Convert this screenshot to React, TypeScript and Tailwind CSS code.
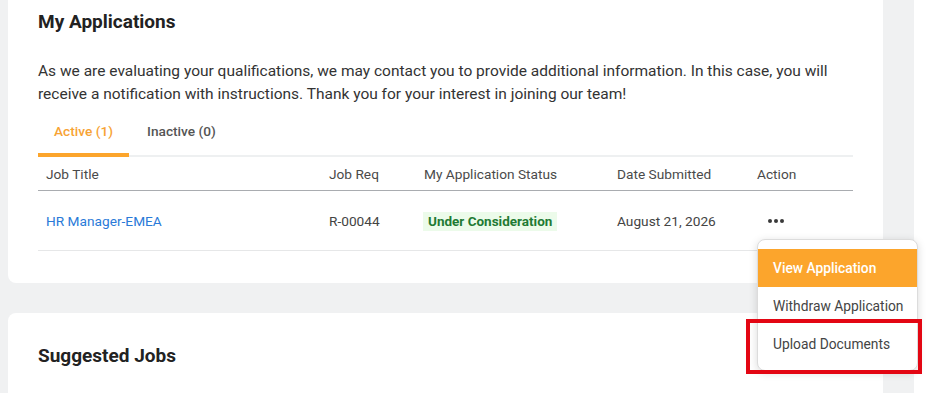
import React from 'react'

const rows = [
  {
    title: 'HR Manager-EMEA',
    req: 'R-00044',
    status: 'Under Consideration',
    date: 'August 21, 2026',
  },
]

const menuItems = ['View Application', 'Withdraw Application', 'Upload Documents']

export default function App() {
  return (
    <div className="w-[936px] h-[393px] overflow-hidden flex bg-white font-[Roboto,sans-serif]">
      <div className="w-[914px] shrink-0 bg-[#f0f1f2] pl-2 pr-[31px] flex flex-col gap-[30px]">
        {/* My Applications */}
        <section className="bg-white rounded-b-lg px-[30px] pt-2 pb-[32px]">
          <h2 className="text-[19px] leading-[28px] font-bold text-[#222]">My Applications</h2>
          <p className="mt-6 text-[15.5px] leading-[23px] text-[#333]">
            As we are evaluating your qualifications, we may contact you to provide additional information. In this
            case, you will receive a notification with instructions. Thank you for your interest in joining our team!
          </p>

          {/* Tabs */}
          <div className="mt-[2px] flex gap-[2px] border-b-2 border-[#eef0f1]">
            <button className="px-4 pt-[13px] pb-[12px] text-[13.7px] leading-[20px] font-medium text-[#f7a334] border-b-4 border-[#fca52c] rounded-t-[3px] -mb-[2px]">
              Active (1)
            </button>
            <button className="px-4 pt-[13px] pb-[14px] text-[13.7px] leading-[20px] font-medium text-[#555]">
              Inactive (0)
            </button>
          </div>

          {/* Table */}
          <div className="text-[13.7px] leading-[20px]">
            <div className="grid grid-cols-[283px_95px_193px_140px_1fr] h-[34px] items-center border-b border-[#a9acb0] text-[#4a4a4a]">
              <div className="pl-2">Job Title</div>
              <div className="pl-2">Job Req</div>
              <div className="pl-2">My Application Status</div>
              <div className="pl-2">Date Submitted</div>
              <div className="pl-2">Action</div>
            </div>
            {rows.map((row) => (
              <div
                key={row.req}
                className="grid grid-cols-[283px_95px_193px_140px_1fr] h-[60px] items-center border-b border-[#e6e7e8] text-[#444]"
              >
                <div className="pl-2 text-[#2a7ad8]">{row.title}</div>
                <div className="pl-2">{row.req}</div>
                <div className="pl-2">
                  <span className="-ml-px inline-block px-[5px] h-[19px] leading-[19px] bg-[#ecfbea] text-[#1f7a34] font-bold text-[13.5px]">
                    {row.status}
                  </span>
                </div>
                <div className="pl-2">{row.date}</div>
                <div className="relative pl-2 h-full flex items-center">
                  <div className="ml-[11px] flex gap-[2px]">
                    <span className="w-[4px] h-[4px] rounded-full bg-[#3a3a3a]" />
                    <span className="w-[4px] h-[4px] rounded-full bg-[#3a3a3a]" />
                    <span className="w-[4px] h-[4px] rounded-full bg-[#3a3a3a]" />
                  </div>

                  {/* Action menu */}
                  <div className="absolute left-2 top-[48px] z-10 w-[161px] pt-[9px] pb-[7px] bg-white rounded-lg border border-[#dcdcdc] shadow-[0_2px_8px_rgba(0,0,0,0.15)]">
                    {menuItems.map((item, i) => (
                      <div
                        key={item}
                        className={`h-[38px] px-[15px] flex items-center whitespace-nowrap text-[13.8px] ${
                          i === 0 ? 'bg-[#fca52c] text-white font-medium' : 'text-[#444]'
                        }`}
                      >
                        {item}
                      </div>
                    ))}
                    {/* highlight annotation */}
                    <div className="absolute -left-[12px] top-[79px] w-[176px] h-[55px] border-4 border-[#e30613]" />
                  </div>
                </div>
              </div>
            ))}
          </div>
        </section>

        {/* Suggested Jobs */}
        <section className="flex-1 bg-white rounded-t-lg px-[30px] pt-[29px]">
          <h2 className="text-[19px] leading-[28px] font-bold text-[#222]">Suggested Jobs</h2>
        </section>
      </div>
    </div>
  )
}
